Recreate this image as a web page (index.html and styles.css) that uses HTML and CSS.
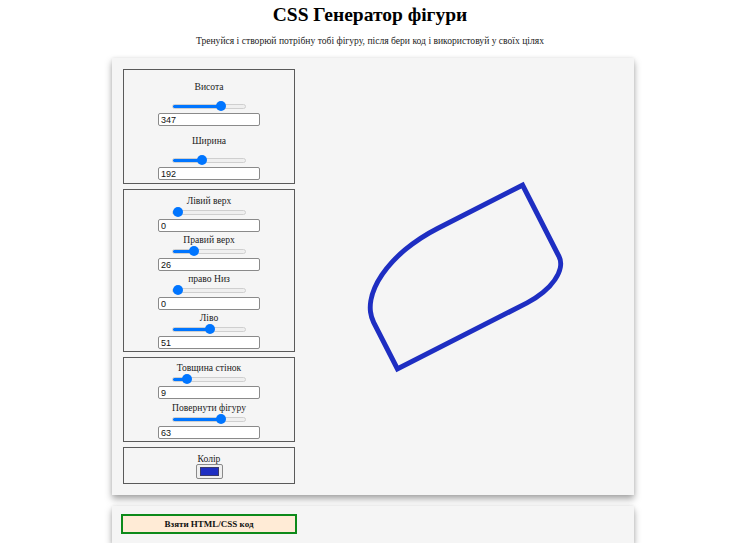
FILE: index.html
```html
<!DOCTYPE html>
<html lang="uk">
<head>
<meta charset="utf-8">
<title>CSS Генератор фігури</title>
<link rel="stylesheet" href="styles.css">
</head>
<body>
<header class="header">
  <h1 class="title">CSS Генератор фігури</h1>
  <p class="subtitle">Тренуйся і створюй потрібну тобі фігуру, після бери код і використовуй у своїх цілях</p>
</header>

<main class="panel">
  <div class="controls">
    <section class="box box-size">
      <div class="group">
        <label class="label">Висота</label>
        <input class="range" type="range" min="0" max="500" value="347" style="--v:0.694">
        <input class="num" type="text" value="347">
      </div>
      <div class="group">
        <label class="label">Ширина</label>
        <input class="range" type="range" min="0" max="500" value="192" style="--v:0.384">
        <input class="num" type="text" value="192">
      </div>
    </section>

    <section class="box box-radius">
      <div class="group">
        <label class="label">Лівий верх</label>
        <input class="range" type="range" min="0" max="100" value="0" style="--v:0">
        <input class="num" type="text" value="0">
      </div>
      <div class="group">
        <label class="label">Правий верх</label>
        <input class="range" type="range" min="0" max="100" value="26" style="--v:0.26">
        <input class="num" type="text" value="26">
      </div>
      <div class="group">
        <label class="label">право Низ</label>
        <input class="range" type="range" min="0" max="100" value="0" style="--v:0">
        <input class="num" type="text" value="0">
      </div>
      <div class="group">
        <label class="label">Ліво</label>
        <input class="range" type="range" min="0" max="100" value="51" style="--v:0.51">
        <input class="num" type="text" value="51">
      </div>
    </section>

    <section class="box box-misc">
      <div class="group">
        <label class="label">Товщина стінок</label>
        <input class="range" type="range" min="0" max="60" value="9" style="--v:0.16">
        <input class="num" type="text" value="9">
      </div>
      <div class="group">
        <label class="label">Повернути фігуру</label>
        <input class="range" type="range" min="0" max="90" value="63" style="--v:0.70">
        <input class="num" type="text" value="63">
      </div>
    </section>

    <section class="box box-color">
      <label class="label">Колір</label>
      <span class="color"><span class="swatch"></span></span>
    </section>
  </div>

  <div class="preview">
    <div class="shape"></div>
  </div>
</main>

<div class="panel panel-actions">
  <button class="btn" type="button">Взяти HTML/CSS код</button>
</div>
</body>
</html>
```

FILE: styles.css
```css
* { box-sizing: border-box; }

html, body {
  margin: 0;
  background: #ffffff;
  color: #111;
  font-family: "Liberation Serif", "Times New Roman", serif;
}

.header {
  text-align: center;
  padding-top: 3px;
}

.title {
  margin: 0;
  font-size: 19.5px;
  line-height: 24px;
  font-weight: bold;
  color: #000;
}

.subtitle {
  margin: 8px 0 0;
  font-size: 9.6px;
  line-height: 12px;
  color: #222;
}

.panel {
  width: 522px;
  margin: 11px 0 0 112px;
  background: #f5f5f5;
  box-shadow: 0 4px 7px rgba(0, 0, 0, 0.35), 0 0 3px rgba(0, 0, 0, 0.08);
  display: flex;
  padding: 11px;
}

.controls {
  width: 172px;
  display: flex;
  flex-direction: column;
  gap: 5px;
}

.box {
  border: 1px solid #5a5a5a;
  display: flex;
  flex-direction: column;
  align-items: center;
}

.group {
  display: flex;
  flex-direction: column;
  align-items: center;
}

.label {
  display: block;
  font-size: 9.6px;
  line-height: 12px;
  color: #222;
  text-align: center;
}

.box-size { padding: 11px 0 3px; gap: 9px; }
.box-size .label { margin-bottom: 8px; }

.box-radius { padding: 5px 0 2px; gap: 2px; }
.box-misc { padding: 4px 0 2px; gap: 3px; }
.box-color { padding: 5px 0 4px; }
.box-color .label { line-height: 11px; }

.range {
  -webkit-appearance: none;
  appearance: none;
  width: 74px;
  height: 10px;
  margin: 0 0 2px;
  background: transparent;
  display: block;
}

.range::-webkit-slider-runnable-track {
  height: 5px;
  border-radius: 3px;
  border: 1px solid #cfcfcf;
  background: linear-gradient(to right,
    #0075ff calc(5px + 64px * var(--v)),
    #efefef calc(5px + 64px * var(--v)));
}

.range::-webkit-slider-thumb {
  -webkit-appearance: none;
  width: 10px;
  height: 10px;
  margin-top: -3.5px;
  border-radius: 50%;
  background: #0075ff;
  border: none;
}

.num {
  display: block;
  width: 102px;
  height: 13px;
  margin: 0;
  padding: 0 2px;
  border: 1px solid #8a8a8a;
  border-radius: 2px;
  background: #fff;
  font-family: "Liberation Sans", Arial, sans-serif;
  font-size: 9px;
  line-height: 11px;
  color: #111;
}

.color {
  display: block;
  width: 27px;
  height: 15px;
  padding: 2px 3px;
  border: 1px solid #8a8a8a;
  border-radius: 2px;
  background: #efefef;
}

.swatch {
  display: block;
  width: 100%;
  height: 100%;
  background: #1e2ec2;
  border: 1px solid #3a3a6a;
}

.preview {
  flex: 1;
  display: flex;
  align-items: center;
  justify-content: center;
}

.shape {
  width: 112px;
  height: 200px;
  border: 5px solid #1e2ec2;
  border-radius: 0 26% 0 51%;
  transform: translate(1px, 0) rotate(63deg);
}

.panel-actions {
  padding: 8px 9px 9px;
}

.btn {
  width: 176px;
  height: 20px;
  margin: 0;
  padding: 0;
  background: #ffebd6;
  border: 2px solid #0d8a1a;
  font-family: "Liberation Serif", "Times New Roman", serif;
  font-weight: bold;
  font-size: 9px;
  color: #111;
}
```
